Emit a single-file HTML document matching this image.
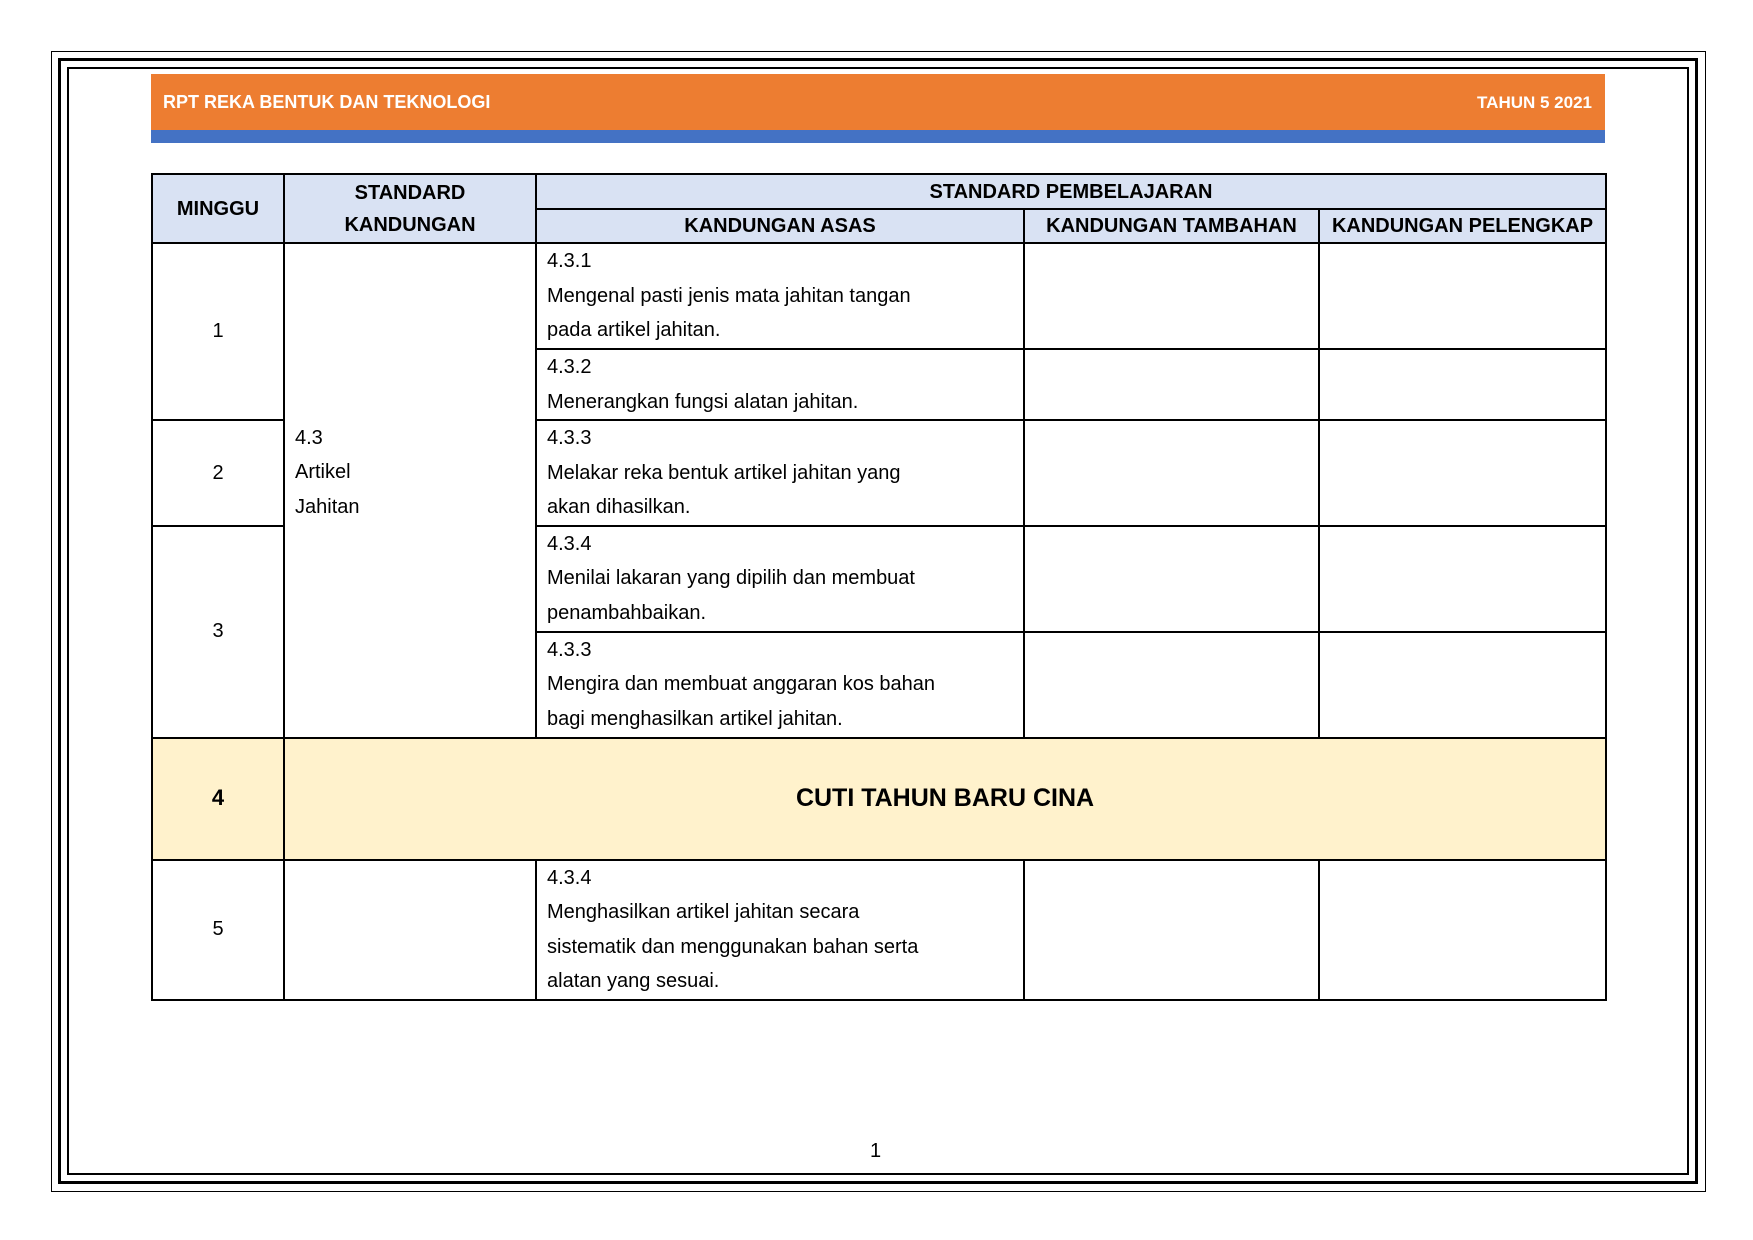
<!DOCTYPE html>
<html><head><meta charset="utf-8"><style>
body{margin:0;width:1753px;height:1240px;background:#fff;position:relative;font-family:"Liberation Sans",sans-serif;overflow:hidden}
.b{position:absolute;box-sizing:border-box;border:solid #000}
.hdr{position:absolute;left:151px;top:74px;width:1454px;height:56px;background:#ed7d31;color:#fff;font-weight:bold;font-size:18px}
.blue{position:absolute;left:151px;top:130px;width:1454px;height:13px;background:#4472c4}
table{position:absolute;left:151px;top:173px;border-collapse:collapse;table-layout:fixed;font-size:20px;color:#000}
td{border:2px solid #000;padding:0 10px;vertical-align:top;line-height:34.5px;box-sizing:border-box;white-space:nowrap}
.h{background:#d9e2f3;text-align:center;vertical-align:middle;font-weight:bold;font-size:20px;line-height:32px;padding:0}
.c{text-align:center;vertical-align:middle}
</style></head><body>
<div class="b" style="left:51px;top:51px;width:1655px;height:1141px;border-width:1.5px"></div>
<div class="b" style="left:58px;top:58px;width:1640px;height:1126px;border-width:3px"></div>
<div class="b" style="left:67px;top:67px;width:1622px;height:1108px;border-width:2px"></div>
<div class="hdr"><span style="position:absolute;left:12px;top:18px">RPT REKA BENTUK DAN TEKNOLOGI</span><span style="position:absolute;right:13px;top:19px;font-size:17px">TAHUN 5 2021</span></div>
<div class="blue"></div>
<table>
<colgroup><col style="width:132px"><col style="width:252px"><col style="width:488px"><col style="width:295px"><col style="width:287px"></colgroup>
<tr style="height:35px"><td class="h" rowspan="2">MINGGU</td><td class="h" rowspan="2">STANDARD<br>KANDUNGAN</td><td class="h" colspan="3">STANDARD PEMBELAJARAN</td></tr>
<tr style="height:33px"><td class="h">KANDUNGAN ASAS</td><td class="h">KANDUNGAN TAMBAHAN</td><td class="h">KANDUNGAN PELENGKAP</td></tr>
<tr style="height:106px"><td class="c" rowspan="2">1</td><td rowspan="5" style="vertical-align:middle;padding-bottom:36px">4.3<br>Artikel<br>Jahitan</td><td>4.3.1<br>Mengenal pasti jenis mata jahitan tangan<br>pada artikel jahitan.</td><td></td><td></td></tr>
<tr style="height:71px"><td>4.3.2<br>Menerangkan fungsi alatan jahitan.</td><td></td><td></td></tr>
<tr style="height:105px"><td class="c">2</td><td>4.3.3<br>Melakar reka bentuk artikel jahitan yang<br>akan dihasilkan.</td><td></td><td></td></tr>
<tr style="height:106px"><td class="c" rowspan="2">3</td><td>4.3.4<br>Menilai lakaran yang dipilih dan membuat<br>penambahbaikan.</td><td></td><td></td></tr>
<tr style="height:106px"><td>4.3.3<br>Mengira dan membuat anggaran kos bahan<br>bagi menghasilkan artikel jahitan.</td><td></td><td></td></tr>
<tr style="height:122px;background:#fff2cc"><td class="c" style="font-weight:bold;font-size:22px">4</td><td colspan="4" class="c" style="font-weight:bold;font-size:25px">CUTI TAHUN BARU CINA</td></tr>
<tr style="height:140px"><td class="c">5</td><td></td><td>4.3.4<br>Menghasilkan artikel jahitan secara<br>sistematik dan menggunakan bahan serta<br>alatan yang sesuai.</td><td></td><td></td></tr>
</table>
<div style="position:absolute;left:870px;top:1140px;font-size:20px">1</div>
</body></html>
